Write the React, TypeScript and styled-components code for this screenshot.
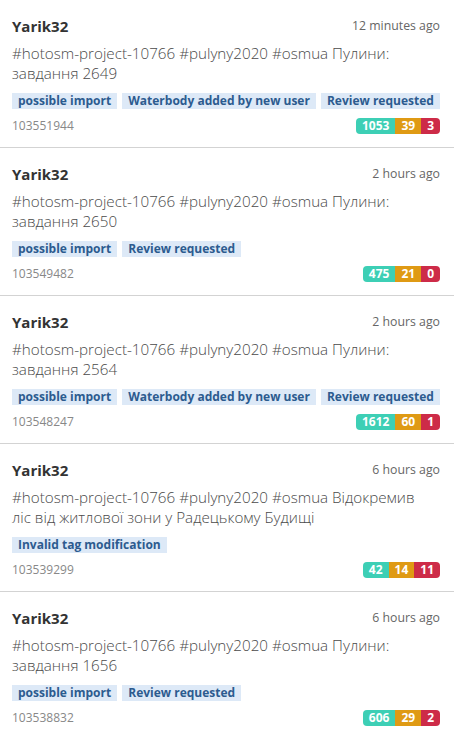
import React from 'react';
import styled, { createGlobalStyle } from 'styled-components';

interface Changeset {
  id: number;
  user: string;
  time: string;
  comment: string;
  tags: string[];
  create: number;
  modify: number;
  del: number;
}

const changesets: Changeset[] = [
  {
    id: 103551944,
    user: 'Yarik32',
    time: '12 minutes ago',
    comment: '#hotosm-project-10766 #pulyny2020 #osmua Пулини: завдання 2649',
    tags: ['possible import', 'Waterbody added by new user', 'Review requested'],
    create: 1053,
    modify: 39,
    del: 3,
  },
  {
    id: 103549482,
    user: 'Yarik32',
    time: '2 hours ago',
    comment: '#hotosm-project-10766 #pulyny2020 #osmua Пулини: завдання 2650',
    tags: ['possible import', 'Review requested'],
    create: 475,
    modify: 21,
    del: 0,
  },
  {
    id: 103548247,
    user: 'Yarik32',
    time: '2 hours ago',
    comment: '#hotosm-project-10766 #pulyny2020 #osmua Пулини: завдання 2564',
    tags: ['possible import', 'Waterbody added by new user', 'Review requested'],
    create: 1612,
    modify: 60,
    del: 1,
  },
  {
    id: 103539299,
    user: 'Yarik32',
    time: '6 hours ago',
    comment:
      '#hotosm-project-10766 #pulyny2020 #osmua Відокремив ліс від житлової зони у Радецькому Будищі',
    tags: ['Invalid tag modification'],
    create: 42,
    modify: 14,
    del: 11,
  },
  {
    id: 103538832,
    user: 'Yarik32',
    time: '6 hours ago',
    comment: '#hotosm-project-10766 #pulyny2020 #osmua Пулини: завдання 1656',
    tags: ['possible import', 'Review requested'],
    create: 606,
    modify: 29,
    del: 2,
  },
];

const GlobalStyle = createGlobalStyle`
  html, body {
    margin: 0;
    padding: 0;
    background: #ffffff;
    font-family: "Open Sans", "Noto Sans", sans-serif;
  }
`;

const List = styled.div`
  width: 454px;
`;

const Card = styled.div`
  padding: 16px 14px 13px 12px;
  border-bottom: 1px solid #d3d3d3;
`;

const Header = styled.div`
  display: flex;
  justify-content: space-between;
  align-items: flex-start;
`;

const User = styled.span`
  font-size: 15px;
  font-weight: 700;
  line-height: 20px;
  color: #333333;
`;

const Time = styled.span`
  font-size: 12.3px;
  line-height: 20px;
  color: #666666;
`;

const Comment = styled.p`
  margin: 7px 0 0;
  padding-right: 12px;
  font-size: 15.2px;
  font-weight: 300;
  line-height: 20px;
  color: #4a4a4a;
`;

const Tags = styled.div`
  display: flex;
  flex-wrap: wrap;
  gap: 5px;
  margin-top: 10px;
`;

const Tag = styled.span`
  padding: 0 6px;
  font-size: 12px;
  font-weight: 700;
  line-height: 16px;
  color: #2c5b8f;
  background: #dde9f7;
  white-space: nowrap;
`;

const Footer = styled.div`
  display: flex;
  justify-content: space-between;
  align-items: center;
  margin-top: 9px;
`;

const Id = styled.span`
  font-size: 12px;
  line-height: 16px;
  color: #888888;
`;

const Counts = styled.div`
  display: flex;
  border-radius: 4px;
  overflow: hidden;
`;

const Count = styled.span<{ $color: string }>`
  padding: 0 6px;
  font-size: 12px;
  font-weight: 700;
  line-height: 16px;
  color: #ffffff;
  background: ${(p) => p.$color};
`;

const ChangesetItem: React.FC<{ cs: Changeset }> = ({ cs }) => (
  <Card>
    <Header>
      <User>{cs.user}</User>
      <Time>{cs.time}</Time>
    </Header>
    <Comment>{cs.comment}</Comment>
    <Tags>
      {cs.tags.map((t) => (
        <Tag key={t}>{t}</Tag>
      ))}
    </Tags>
    <Footer>
      <Id>{cs.id}</Id>
      <Counts>
        <Count $color="#3dcfb5">{cs.create}</Count>
        <Count $color="#df9a14">{cs.modify}</Count>
        <Count $color="#cd2b48">{cs.del}</Count>
      </Counts>
    </Footer>
  </Card>
);

export default function App() {
  return (
    <>
      <GlobalStyle />
      <List>
        {changesets.map((cs) => (
          <ChangesetItem key={cs.id} cs={cs} />
        ))}
      </List>
    </>
  );
}
